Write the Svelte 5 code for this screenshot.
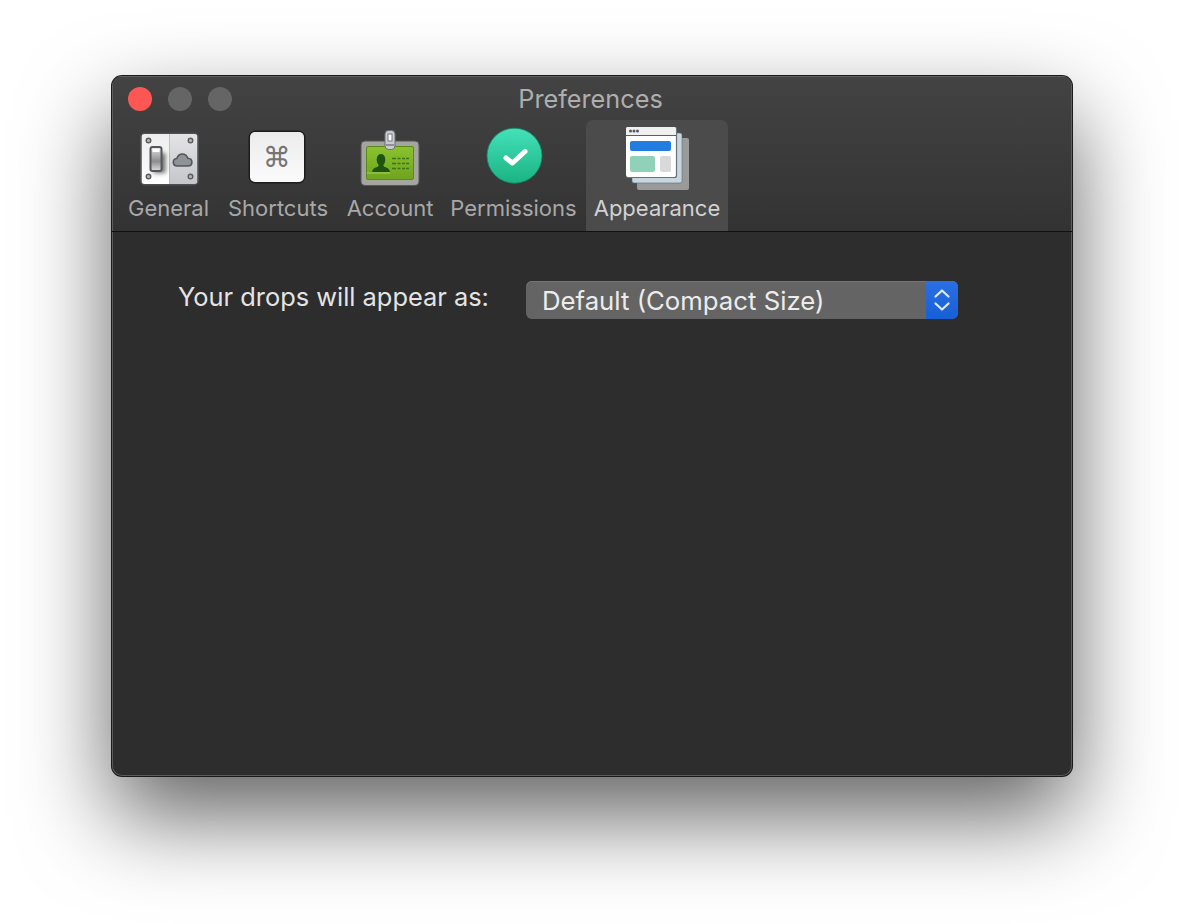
<script>
  const tabs = [
    { id: "general", label: "General", view: "136.500 126 64 64", width: 97 },
    { id: "shortcuts", label: "Shortcuts", view: "246 126 64 64", width: 122 },
    { id: "account", label: "Account", view: "358 126 64 64", width: 102 },
    { id: "permissions", label: "Permissions", view: "481.500 126 64 64", width: 145 },
    { id: "appearance", label: "Appearance", view: "625 126 64 64", width: 142 }
  ];
  let selected = "appearance";
</script>

<div class="page">
  <div class="window">
    <header class="toolbar">
      <div class="titlebar">
        <div class="lights">
          <span class="light close"></span>
          <span class="light"></span>
          <span class="light"></span>
        </div>
        <div class="title">Preferences</div>
      </div>
      <nav class="tabs">
        {#each tabs as tab}
          <button
            class="tab"
            class:selected={tab.id === selected}
            style:width="{tab.width}px"
            on:click={() => (selected = tab.id)}
          >
            <svg width="64" height="64" viewBox={tab.view}>
              {#if tab.id === "general"}
                <defs>
                  <linearGradient id="plateL" x1="0" y1="0" x2="0" y2="1">
                    <stop offset="0" stop-color="#eeeeee" />
                    <stop offset="1" stop-color="#ffffff" />
                  </linearGradient>
                  <linearGradient id="plateR" x1="0" y1="0" x2="0" y2="1">
                    <stop offset="0" stop-color="#e4e4e6" />
                    <stop offset="1" stop-color="#c4c6ca" />
                  </linearGradient>
                  <linearGradient id="sw" x1="0" y1="0" x2="0" y2="1">
                    <stop offset="0" stop-color="#f4f4f4" />
                    <stop offset="0.25" stop-color="#bdbdbd" />
                    <stop offset="0.6" stop-color="#8d8d8d" />
                    <stop offset="1" stop-color="#dedede" />
                  </linearGradient>
                  <filter id="blur2" x="-50%" y="-50%" width="200%" height="200%"><feGaussianBlur stdDeviation="2.200" /></filter>
                  <clipPath id="plateClip"><rect x="141" y="134" width="56" height="50" rx="3" /></clipPath>
                </defs>
                <rect x="139.500" y="132.500" width="59" height="53" rx="5" fill="#4e4f53" />
                <g clip-path="url(#plateClip)">
                  <rect x="141" y="134" width="28" height="50" fill="url(#plateL)" />
                  <rect x="169" y="134" width="28" height="50" fill="url(#plateR)" />
                  <rect x="153" y="153" width="12" height="20" fill="#6f6f6f" filter="url(#blur2)" />
                </g>
                {#each [[148, 140.500], [190, 140.500], [148, 176.500], [190, 176.500]] as [cx, cy]}
                  <circle {cx} {cy} r="2.300" fill="#b4b4b4" stroke="#5e5e5e" stroke-width="1.400" />
                {/each}
                <rect x="150" y="147" width="11" height="24" rx="2" fill="url(#sw)" stroke="#55575c" stroke-width="2" />
                <rect x="152" y="149" width="7" height="3" fill="#fff" />
                <path d="M177 166c-2.700 0-4.200-1.800-4.200-3.800 0-2.100 1.600-3.500 3.500-3.700 .9-2.700 3-4.500 5.500-4.500 2.600 0 4.700 1.700 5.500 4.300 2.200.1 4.100 1.600 4.100 3.900 0 2.200-1.700 3.800-4 3.800z" fill="#8e9299" stroke="#54565b" stroke-width="1.600" />
              {:else if tab.id === "shortcuts"}
                <defs>
                  <linearGradient id="key" x1="0" y1="0" x2="0" y2="1">
                    <stop offset="0" stop-color="#ececec" />
                    <stop offset="1" stop-color="#fbfbfb" />
                  </linearGradient>
                </defs>
                <rect x="248.500" y="130.500" width="57" height="53" rx="7" fill="#1c1c1c" />
                <rect x="250" y="132" width="54" height="50" rx="5" fill="url(#key)" />
                <text x="277" y="167" text-anchor="middle" class="cmd">⌘</text>
              {:else if tab.id === "account"}
                <defs>
                  <linearGradient id="card" x1="0" y1="0" x2="0" y2="1">
                    <stop offset="0" stop-color="#8ac22f" />
                    <stop offset="1" stop-color="#6fa31e" />
                  </linearGradient>
                </defs>
                <rect x="361" y="141" width="58" height="44.500" rx="4" fill="#a3a59e" stroke="#55565a" stroke-width="1" />
                <rect x="366.500" y="146.500" width="47" height="33" rx="1.500" fill="url(#card)" stroke="#5c8a18" stroke-width="1" />
                <rect x="367" y="172.500" width="23" height="1" fill="#b4dc6e" opacity="0.800" />
                <path d="M372 172c.4-3 2.200-3.900 5-5 1.300-.5 1.700-1.200 1.600-2.300-1.300-1.200-1.900-3.200-1.900-5.300 0-3.500 2-5.400 4.300-5.400s4.300 1.900 4.300 5.400c0 2.100-.6 4.100-1.900 5.300-.1 1.100.3 1.800 1.600 2.300 2.800 1.100 4.600 2 5 5z" fill="#1f5410" />
                {#each [158, 163, 168] as y}
                  <path d="M392 {y + 0.500}h4M397.500 {y + 0.500}h3M402 {y + 0.500}h3M406 {y + 0.500}h3" stroke="#3a7613" stroke-width="1.500" />
                {/each}
                <rect x="385" y="130.500" width="10" height="19" rx="3.500" fill="#c9cbd0" stroke="#6d7076" stroke-width="1" />
                <rect x="388" y="134" width="4" height="7" fill="#fafafa" stroke="#5d6066" stroke-width="0.800" />
                <rect x="385.500" y="144" width="9" height="2" fill="#8e9096" />
              {:else if tab.id === "permissions"}
                <defs>
                  <linearGradient id="ok" x1="0" y1="0" x2="0" y2="1">
                    <stop offset="0" stop-color="#44e1b9" />
                    <stop offset="1" stop-color="#1ab383" />
                  </linearGradient>
                </defs>
                <circle cx="514" cy="155.700" r="27.500" fill="url(#ok)" stroke="#158a66" stroke-width="0.800" />
                <path d="M505.500 158l6.500 5 12.500-11.500" fill="none" stroke="#fff" stroke-width="5" stroke-linecap="round" stroke-linejoin="round" />
              {:else}
                <rect x="637" y="138" width="52" height="52" rx="2" fill="#9a9a9a" />
                <rect x="632" y="133" width="50" height="50" rx="2" fill="#c6d7e0" stroke="#5f6a72" stroke-width="0.600" />
                <rect x="626" y="127" width="50" height="50" rx="2" fill="#fff" />
                <path d="M626.500 177.500h48a2 2 0 0 0 2-2v-48" fill="none" stroke="#68717a" stroke-width="1.200" />
                <path d="M626 135v-6a2 2 0 0 1 2-2h46a2 2 0 0 1 2 2v6z" fill="#f0f0f0" />
                <path d="M626 135.500h50" stroke="#5a5d62" stroke-width="1" />
                {#each [630.500, 634, 637.500] as cx}
                  <circle {cx} cy="131" r="1.500" fill="#55585c" />
                {/each}
                <rect x="630" y="141" width="41" height="10" rx="2" fill="#227de0" />
                <rect x="630" y="156" width="25" height="16" rx="2" fill="#8fd1b9" />
                <rect x="660" y="156" width="11" height="16" rx="2" fill="#d9d9d9" />
              {/if}
            </svg>
            <span class="label">{tab.label}</span>
          </button>
        {/each}
      </nav>
    </header>

    <main class="content">
      <span class="prompt">Your drops will appear as:</span>
      <div class="select">
        <span class="value">Default (Compact Size)</span>
        <span class="stepper">
          <svg width="18" height="26" viewBox="0 0 18 26">
            <path d="M2.500 9.500L9 3.500l6.500 6M2.500 16.500L9 22.500l6.500-6" fill="none" stroke="#dfe9fb" stroke-width="2.200" stroke-linecap="round" stroke-linejoin="round" />
          </svg>
        </span>
      </div>
    </main>
  </div>
</div>

<style>
  :global(body) {
    background: #fff;
  }

  .page {
    box-sizing: border-box;
    height: 924px;
    padding: 76px 112px 148px;
    font-family: Inter, "Liberation Sans", sans-serif;
    overflow: hidden;
  }

  .window {
    height: 700px;
    display: flex;
    flex-direction: column;
    background: #2d2d2d;
    border-radius: 10px;
    overflow: hidden;
    box-shadow:
      inset 0 0 0 1px #5a5a5a,
      0 0 0 1px #1a1a1a,
      0 40px 90px rgba(0, 0, 0, 0.62);
  }

  .toolbar {
    height: 156px;
    flex: none;
    box-sizing: border-box;
    display: flex;
    flex-direction: column;
    background: linear-gradient(#434343, #333333);
    border-bottom: 1px solid #111;
    box-shadow: inset 1px 1px 0 #5f5f5f, inset -1px 0 0 #5f5f5f;
  }

  .titlebar {
    height: 44px;
    flex: none;
    display: grid;
    grid-template-columns: 1fr auto 1fr;
    align-items: center;
    padding: 0 16px;
  }

  .lights {
    display: flex;
    gap: 16px;
  }

  .light {
    width: 24px;
    height: 24px;
    border-radius: 50%;
    background: #656565;
  }

  .light.close {
    background: #fd5754;
  }

  .title {
    font-size: 25.250px;
    line-height: 46px;
    margin-right: 3px;
    color: #aeaeae;
  }

  .tabs {
    flex: 1;
    display: flex;
    padding-left: 8px;
  }

  .tab {
    box-sizing: border-box;
    border: 0;
    margin: 0;
    padding: 6px 0 0;
    background: none;
    font: inherit;
    display: flex;
    flex-direction: column;
    align-items: center;
    border-radius: 7px 7px 0 0;
  }

  .tab.selected {
    background: #4b4b4b;
  }

  .tab svg {
    display: block;
    flex: none;
  }

  .label {
    font-size: 22px;
    line-height: 28px;
    margin-top: 4px;
    color: #a8a8a8;
    white-space: nowrap;
  }

  .tab.selected .label {
    color: #d2d2d2;
  }

  .cmd {
    font-family: "DejaVu Sans", sans-serif;
    font-size: 28px;
    fill: #757575;
  }

  .content {
    display: flex;
    align-items: flex-start;
    gap: 37px;
    padding: 49px 0 0 66px;
  }

  .prompt {
    font-size: 25.400px;
    line-height: 32px;
    color: #e4e4e4;
  }

  .select {
    width: 432px;
    height: 38px;
    display: flex;
    background: #646464;
    border-radius: 6px;
    overflow: hidden;
    box-shadow: inset 0 1px 0 #757575;
  }

  .value {
    flex: 1;
    padding-left: 16px;
    font-size: 25.750px;
    line-height: 39px;
    color: #ececec;
  }

  .stepper {
    width: 32px;
    display: flex;
    align-items: center;
    justify-content: center;
    background: linear-gradient(#2a70e4, #175fd6);
  }
</style>
